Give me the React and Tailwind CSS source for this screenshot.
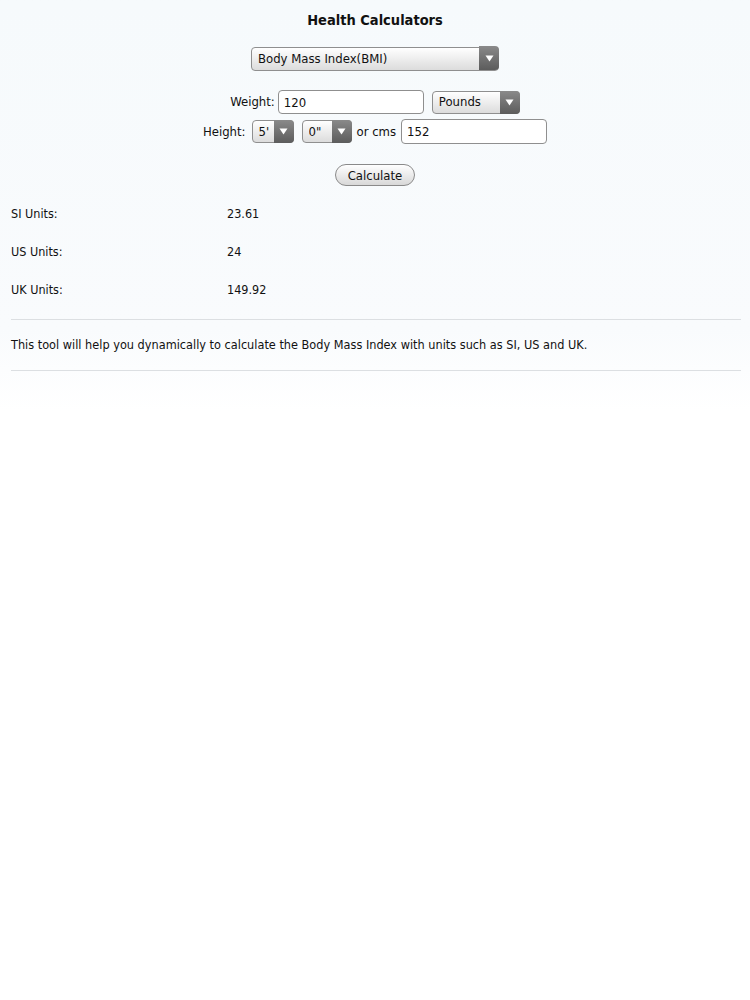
import { useState } from 'react'

const font = { fontFamily: '"DejaVu Sans Condensed", "DejaVu Sans", sans-serif' }

function Arrow() {
  return (
    <span className="pointer-events-none absolute right-0 top-0 bottom-0 flex w-[20px] items-center justify-center rounded-r-[4px] bg-gradient-to-b from-[#8a8a8a] to-[#5c5c5c]">
      <svg width="9" height="7" viewBox="0 0 9 7">
        <path d="M0.5 0.5 L8.5 0.5 L4.5 6.5 Z" fill="#fff" />
      </svg>
    </span>
  )
}

function Select({ value, onChange, options, className }) {
  return (
    <div className={`relative ${className}`}>
      <select value={value} onChange={(e) => onChange(e.target.value)}
        className="h-full w-full appearance-none rounded-[4px] border border-[#8f8f8f] bg-gradient-to-b from-white to-[#dcdcdc] pl-[6px] pr-[22px] text-[13px] text-[#111] outline-none"
        style={font}>
        {options.map((o) => <option key={o} value={o}>{o}</option>)}
      </select>
      <Arrow />
    </div>
  )
}

export default function App() {
  const [calc, setCalc] = useState('Body Mass Index(BMI)')
  const [weight, setWeight] = useState('120')
  const [unit, setUnit] = useState('Pounds')
  const [feet, setFeet] = useState("5'")
  const [inches, setInches] = useState('0"')
  const [cms, setCms] = useState('152')

  const results = [
    { label: 'SI Units:', value: '23.61' },
    { label: 'US Units:', value: '24' },
    { label: 'UK Units:', value: '149.92' },
  ]

  return (
    <div className="min-h-[1000px] bg-white text-[#111]" style={font}>
      <div className="bg-gradient-to-b from-[#f6fafc] via-[#f9fbfd] via-80% to-white pl-[11px] pr-[9px] pt-[10px] pb-[40px]">
        {/* form block, nudged so it centres on the page rather than the padded box */}
        <div className="pr-[2px]">
          <h1 className="text-center text-[14.5px] font-bold leading-[20px]">Health Calculators</h1>

          <div className="mt-[16px] flex justify-center">
            <Select value={calc} onChange={setCalc} className="h-[24px] w-[248px]"
              options={['Body Mass Index(BMI)', 'Basal Metabolic Rate(BMR)', 'Body Fat']} />
          </div>

          <div className="mt-[20px] flex items-center justify-center text-[13px]">
            <span className="mr-[3px]">Weight:</span>
            <input value={weight} onChange={(e) => setWeight(e.target.value)}
              className="h-[24px] w-[146px] rounded-[4px] border border-[#8f8f8f] bg-white px-[5px] text-[13px] outline-none" />
            <Select value={unit} onChange={setUnit} className="ml-[8px] h-[23px] w-[88px]"
              options={['Pounds', 'Kilograms']} />
          </div>

          <div className="mt-[5px] flex items-center justify-center text-[13px]">
            <span className="mr-[6px]">Height:</span>
            <Select value={feet} onChange={setFeet} className="h-[23px] w-[42px]"
              options={["3'", "4'", "5'", "6'", "7'"]} />
            <Select value={inches} onChange={setInches} className="ml-[8px] h-[23px] w-[50px]"
              options={['0"', '1"', '2"', '3"', '4"', '5"', '6"', '7"', '8"', '9"', '10"', '11"']} />
            <span className="mx-[5px]">or cms</span>
            <input value={cms} onChange={(e) => setCms(e.target.value)}
              className="h-[25px] w-[146px] rounded-[4px] border border-[#8f8f8f] bg-white px-[5px] text-[13px] outline-none" />
          </div>

          <div className="mt-[20px] flex justify-center">
            <button className="h-[22px] w-[80px] rounded-full border border-[#8a8a8a] bg-gradient-to-b from-white to-[#d8d8d8] text-[13px] leading-none">
              Calculate
            </button>
          </div>
        </div>

        <div className="mt-[9px] text-[12.5px]">
          {results.map((r) => (
            <div key={r.label} className="flex h-[38px] items-center">
              <span className="w-[216px]">{r.label}</span>
              <span>{r.value}</span>
            </div>
          ))}
        </div>

        <hr className="mt-[10px] border-t border-[#dcdfe2]" />
        <p className="py-[17px] text-[12.6px] leading-[16px]">
          This tool will help you dynamically to calculate the Body Mass Index with units such as SI, US and UK.
        </p>
        <hr className="border-t border-[#dcdfe2]" />
      </div>
    </div>
  )
}
